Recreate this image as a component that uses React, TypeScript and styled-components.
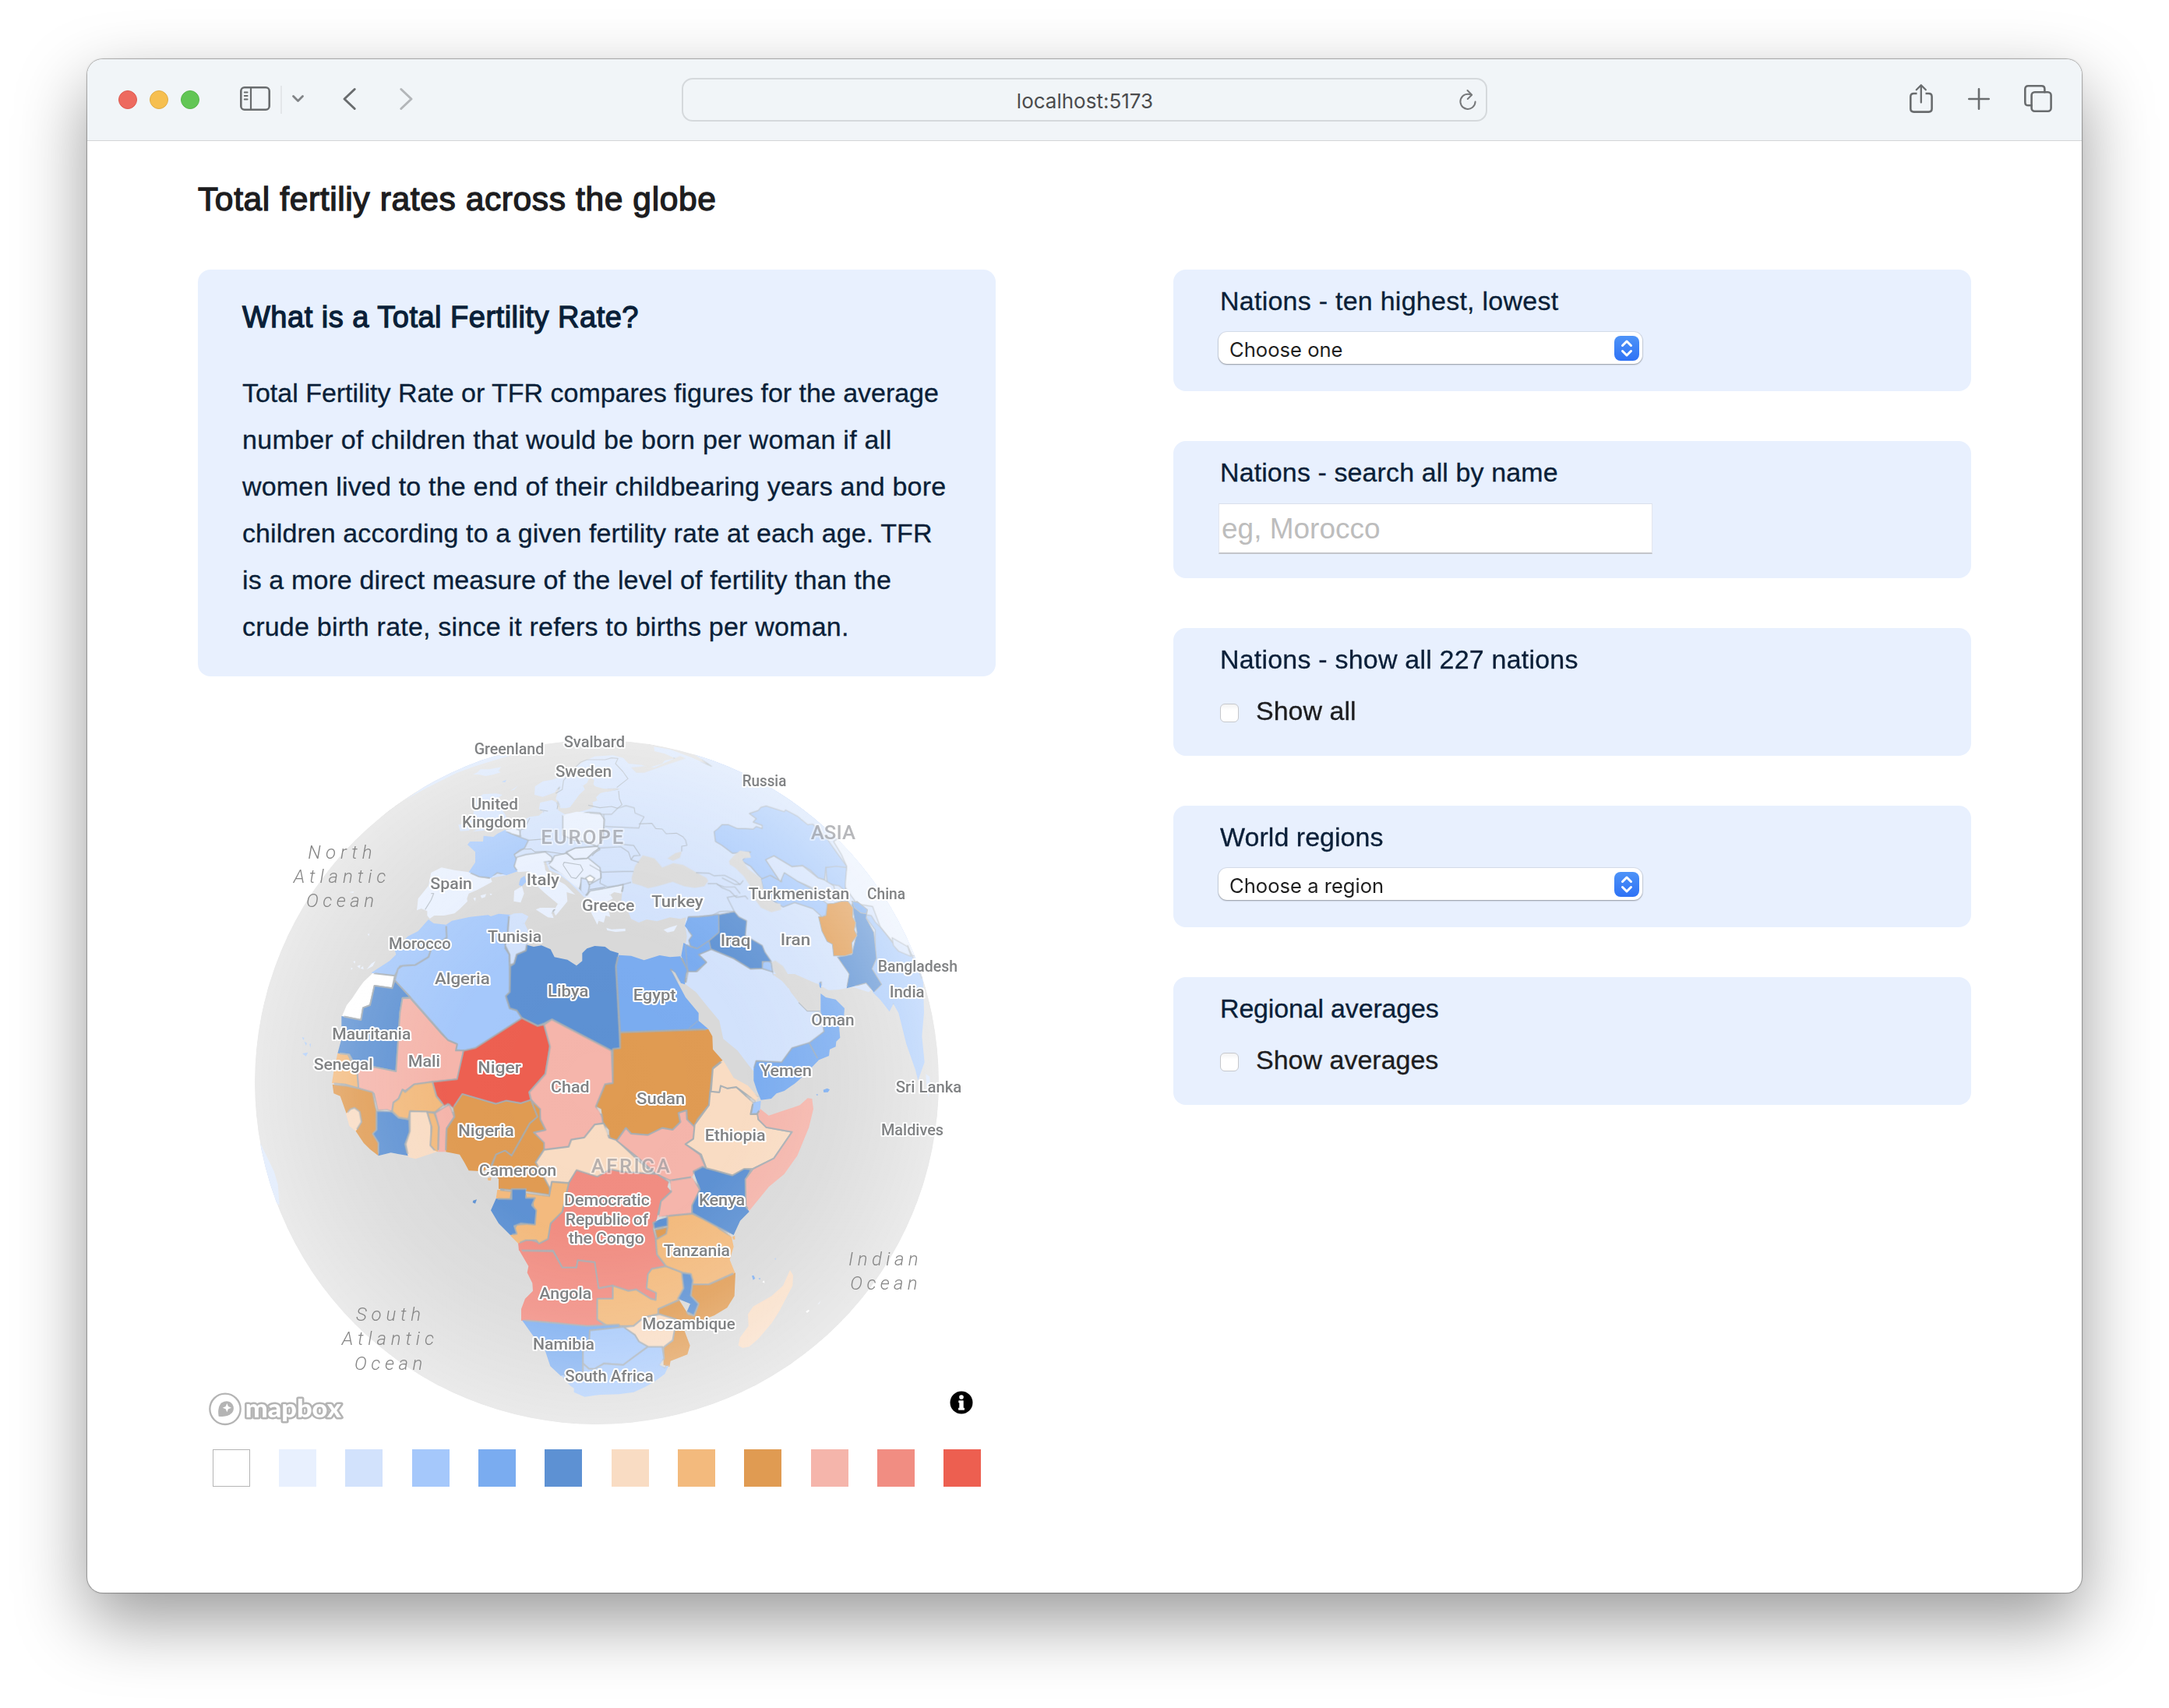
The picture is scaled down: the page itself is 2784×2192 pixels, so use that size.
import React from 'react';
import styled, { createGlobalStyle } from 'styled-components';

const sans = '"Liberation Sans", Helvetica, Arial, sans-serif';
const system = 'Inter, "Liberation Sans", sans-serif';

const GlobalStyle = createGlobalStyle`
  * { box-sizing: border-box; }
  html, body { margin: 0; background: #fff; }
  body { font-family: ${sans}; color: #1d1d1f; }
  h1, h2, p { margin: 0; }
`;

/* ---------- window ---------- */

const Desktop = styled.div`
  width: 2784px;
  height: 2192px;
  padding: 76px 112px 148px;
  overflow: hidden;
  background: #fff;
`;

const Window = styled.div`
  height: 1968px;
  display: flex;
  flex-direction: column;
  border-radius: 20px;
  overflow: hidden;
  background: #fff;
  box-shadow: 0 0 0 1px rgba(0, 0, 0, 0.2), 0 0 3px rgba(0, 0, 0, 0.25), 0 36px 90px rgba(0, 0, 0, 0.4);
`;

const Toolbar = styled.header`
  flex: none;
  height: 105px;
  display: grid;
  grid-template-columns: 1fr 1034px 1fr;
  align-items: center;
  background: #f1f5f8;
  border-bottom: 1px solid #d3d5d7;
`;

const ToolGroup = styled.div`
  display: flex;
  align-items: center;
`;

const LeftTools = styled(ToolGroup)`
  padding-left: 40px;
`;

const RightTools = styled(ToolGroup)`
  justify-content: flex-end;
  gap: 44.5px;
  padding: 0 38px 3px 0;
`;

const Lights = styled.div`
  display: flex;
  gap: 16px;
  margin-right: 44px;
`;

const Light = styled.span<{ $fill: string; $edge: string }>`
  width: 24px;
  height: 24px;
  border-radius: 50%;
  background: ${(p) => p.$fill};
  border: 1px solid ${(p) => p.$edge};
`;

const Divider = styled.span`
  width: 2px;
  height: 36px;
  margin: 0 13px;
  background: #e3e6e9;
`;

const IconSlot = styled.span<{ $ml?: number }>`
  display: flex;
  margin-left: ${(p) => p.$ml ?? 0}px;
  margin-bottom: 3px;
`;

const AddressBar = styled.div`
  height: 56px;
  display: grid;
  grid-template-columns: 44px 1fr 44px;
  align-items: center;
  border: 2px solid #d5d9dc;
  border-radius: 14px;
  font: 400 26px ${system};
  color: #4b4c4d;
  text-align: center;
`;

const Reload = styled.span`
  display: flex;
  justify-content: center;
  padding-right: 2px;
`;

const AddressText = styled.span`
  padding: 3px 0 0 1px;
`;

/* ---------- page ---------- */

const Page = styled.main`
  flex: 1;
  padding: 0 142px;
`;

const Title = styled.h1`
  height: 165px;
  padding-top: 50px;
  font-size: 42.5px;
  line-height: 50px;
  font-weight: 400;
  letter-spacing: 0.62px;
  -webkit-text-stroke: 1.4px currentColor;
`;

const Columns = styled.div`
  display: grid;
  grid-template-columns: 1024px 1024px;
  column-gap: 228px;
  align-items: start;
`;

const Panel = styled.section`
  background: #e8f0fe;
  border-radius: 16px;
  color: #0a1f38;
`;

const InfoPanel = styled(Panel)`
  height: 522px;
  padding: 39px 57px 0;
`;

const InfoTitle = styled.h2`
  font-size: 38px;
  line-height: 44px;
  font-weight: 400;
  letter-spacing: 0.5px;
  -webkit-text-stroke: 1.3px currentColor;
`;

const InfoText = styled.p`
  margin-top: 45px;
  font-size: 34px;
  line-height: 60px;
  white-space: nowrap;
  -webkit-text-stroke: 0.3px currentColor;
`;

const InfoLine = styled.span<{ $tracking: number }>`
  display: block;
  letter-spacing: ${(p) => p.$tracking}px;
`;

const MapFrame = styled.div`
  display: flex;
  margin-top: 32px;
  height: 940px;
`;

const Legend = styled.div`
  display: flex;
  justify-content: space-around;
  margin-top: 20px;
`;

const Swatch = styled.span<{ $color: string; $outlined?: boolean }>`
  width: 48px;
  height: 48px;
  background: ${(p) => p.$color};
  border: ${(p) => (p.$outlined ? '1px solid #b5b5b5' : 'none')};
`;

const Filters = styled.div`
  display: flex;
  flex-direction: column;
  gap: 64px;
`;

const FilterPanel = styled(Panel)<{ $height: number }>`
  height: ${(p) => p.$height}px;
  padding: 20px 58px 0;
`;

const FilterTitle = styled.h2<{ $tracking: number }>`
  padding-left: 2px;
  font-size: 34px;
  line-height: 40px;
  font-weight: 400;
  letter-spacing: ${(p) => p.$tracking}px;
  -webkit-text-stroke: 0.3px currentColor;
`;

const Select = styled.button`
  display: flex;
  align-items: center;
  justify-content: space-between;
  width: 544px;
  height: 41px;
  margin: 20px 0 0;
  padding: 0 4px 0 14px;
  border: 0;
  border-radius: 11px;
  background: #fff;
  box-shadow: 0 0 0 1px rgba(0, 0, 0, 0.07), 0 1px 2px rgba(0, 0, 0, 0.32);
  font: 400 25.6px/32px ${system};
  color: #1f1f1f;
`;

const SelectLabel = styled.span`
  padding-top: 4px;
`;

const Stepper = styled.span`
  display: flex;
  align-items: center;
  justify-content: center;
  width: 32px;
  height: 32px;
  border-radius: 8px;
  background: linear-gradient(#4d93f8, #2f72f5);
`;

const SearchInput = styled.input`
  display: block;
  width: 557px;
  height: 65px;
  margin: 20px 0 0;
  padding: 1px 4px 0 3px;
  border: 1px solid #e2e6ee;
  border-top-color: #d9dfeb;
  border-bottom: 2px solid #c3c5ca;
  background: #fff;
  font: 400 37px ${sans};
  &::placeholder { color: #bdbdbd; opacity: 1; }
`;

const CheckRow = styled.label`
  display: flex;
  align-items: center;
  margin-top: 26px;
  padding-left: 2px;
  font-size: 34px;
  line-height: 40px;
  color: #1d1d1f;
  gap: 22px;
  -webkit-text-stroke: 0.3px currentColor;
`;

const Checkbox = styled.input`
  appearance: none;
  width: 24px;
  height: 24px;
  margin: 5px 0 0;
  border: 1px solid #c6c8cc;
  border-radius: 6px;
  background: linear-gradient(#f3f3f3, #fff 35%);
`;

/* ---------- map ---------- */

const MapSvg = styled.svg`
  display: block;
  width: 1024px;
  height: 940px;
`;

const CountryLabel = styled.text`
  font-family: Roboto, sans-serif;
  font-weight: 500;
  font-size: 61px;
  fill: #808284;
  stroke: #fff;
  stroke-width: 12px;
  stroke-linejoin: round;
  paint-order: stroke;
`;

const ContinentLabel = styled.text`
  font-family: Roboto, sans-serif;
  font-weight: 500;
  font-size: 77px;
  fill: #8a8c92;
  fill-opacity: 0.62;
  stroke: #fff;
  stroke-opacity: 0.42;
  stroke-width: 12px;
  stroke-linejoin: round;
  paint-order: stroke;
`;

const OceanLabel = styled.text`
  font-family: Roboto, sans-serif;
  font-weight: 300;
  font-style: italic;
  font-size: 72px;
  fill: #868686;
`;

const LogoText = styled.text`
  font-family: Lato, sans-serif;
  font-weight: 900;
  font-size: 96px;
  fill: #fff;
  stroke: #b4b4b4;
  stroke-width: 15px;
  stroke-linejoin: round;
  paint-order: stroke;
`;

const palette = [
  '#ffffff', '#e8f0fe', '#d2e2fc', '#a5c8fb', '#7aacf0', '#5d91d3',
  '#f9dcc3', '#f3ba7d', '#e09b52', '#f5b5ab', '#f18d82', '#ed5f50',
];
const OCEAN = '#d9d9d9';

/* The globe is drawn as four tiles; each shape names its tile, colour and outline. */
type Tile = 'nw' | 'ne' | 'sw' | 'se';
type Shape = [Tile, number | 'sea', string];

const tileShift: Record<Tile, string> = {
  nw: 'translate(0 0)',
  ne: 'translate(1320 0)',
  sw: 'translate(0 1110)',
  se: 'translate(1320 1110)',
};

const base: Shape[] = [
  ['nw', 2, '600,290 760,180 870,132 1000,112 1010,118 960,132 870,160 800,185 740,215 680,245'],
  ['nw', 2, '862,192 880,182 890,172 925,172 970,163 960,178 968,184 940,192 910,198 885,192'],
  ['nw', 3, '972,220 990,212 985,222'],
  ['nw', 2, '1005,255 1035,235 1020,250'],
  ['nw', 2, '1098,270 1100,238 1130,218 1165,212 1200,200 1225,178 1260,160 1290,140 1330,122 1400,118 1440,128 1460,150 1510,155 1540,165 1590,150 1600,138 1640,130 1600,112 1560,102 1558,85 1620,95 1700,125 1780,160 1700,105 1650,60 1900,-50 2800,300 2800,900 2595,985 2430,990 2385,1030 2325,1010 2270,1020 2230,1022 2190,1000 2100,960 1690,960 1677,860 1685,815 1678,770 1682,742 1660,748 1620,742 1570,757 1530,750 1500,762 1470,748 1450,700 1432,680 1435,650 1440,625 1400,635 1360,640 1290,665 1265,640 1230,605 1190,575 1155,560 1140,525 1160,520 1100,500 1030,565 990,580 930,590 885,540 960,440 985,412 1020,400 1045,372 1080,355 1115,350 1132,335 1115,325 1120,300 1165,290 1185,300 1190,330 1215,345 1262,338 1310,325 1325,318 1322,298 1340,292 1335,280 1350,265 1370,258 1420,248 1340,246 1325,230 1328,212 1310,205 1300,225 1285,235 1292,250 1270,270 1250,298 1235,318 1220,322 1198,322 1190,300 1180,285 1195,240 1175,262 1130,278'],
  ['nw', 2, '815,385 830,365 865,368 870,385 845,408 812,410 805,385'],
  ['nw', 2, '862,350 870,290 900,268 950,265 975,270 945,290 960,310 985,345 1000,380 975,395 930,405 860,412 900,395 890,370 850,360'],
  ['ne', 1, '930,450 960,500 980,545 970,620 1020,690 1080,700 1110,780 1160,840 1220,885 1240,890 1500,900 1500,400 1000,400'],
  ['ne', 3, '1045,730 1075,735 1090,760 1110,780 1130,805 1165,850 1225,890 1215,850 1250,930 1275,990 1278,1110 1270,1200 1280,1300 1255,1370 1245,1330 1210,1230 1180,1110 1160,1075 1145,1105 1110,1060 1080,1030 1090,1000 1070,930 1090,900 1090,790'],
  ['ne', 2, '1155,820 1215,855 1228,892 1180,872 1160,850'],
  ['ne', 5, '1000,690 1020,680 1060,715 1055,745 1085,800 1095,900 1078,940 1115,1000 1085,1030 1055,995 980,1015 990,960 945,895 1000,885 1020,800'],
  ['ne', 4, '1000,680 1025,685 1060,712 1055,728 1035,725 1010,705'],
  ['ne', 8, '872,740 900,735 905,690 930,688 960,680 985,680 1005,705 1003,740 1015,762 1010,790 1020,812 1000,840 1003,880 975,890 930,890 925,845 905,835 885,795'],
  ['ne', 3, '470,412 485,400 500,385 525,385 560,400 590,400 620,402 632,392 655,400 655,388 620,375 632,362 605,342 640,330 650,318 670,313 740,335 745,328 790,352 830,385 850,383 905,440 940,490 980,545 975,585 965,612 940,600 900,548 895,598 870,590 840,560 810,543 770,547 700,505 670,520 725,605 690,582 655,595 640,580 610,545 575,525 610,490 540,495 500,465 475,450'],
  ['ne', 3, '900,550 940,545 980,550 975,610 975,640 950,620 905,612'],
  ['ne', 3, '650,595 685,580 730,605 728,575 740,570 775,582 790,602 860,640 870,660 905,690 900,732 885,740 850,708 780,685 735,702 700,680 660,640'],
  ['ne', 2, '668,520 700,505 770,547 810,543 870,590 895,598 930,620 935,640 985,650 920,650 870,640 830,620 790,602 740,570 725,605'],
];

const europe: Shape[] = [
  ['nw', 1, '700,570 740,550 790,560 845,568 885,585 930,592 935,605 880,635 845,650 838,670 840,680 810,710 790,727 750,735 712,735 695,747 685,735 685,718 662,708 645,715 650,670 690,620'],
  ['nw', 3, '840,462 850,450 900,450 902,428 940,432 955,420 985,405 1010,420 1040,432 1075,445 1060,475 1020,500 1030,520 1020,545 1033,565 990,580 955,570 930,590 885,585 845,568 870,530 870,490'],
  ['nw', 3, '1040,605 1045,592 1060,582 1066,605 1050,622 1038,618'],
  ['nw', 1, '1020,640 1050,622 1058,650 1045,685 1018,680'],
  ['nw', 1, '1030,510 1065,500 1140,490 1165,510 1165,525 1135,528 1140,560 1170,590 1215,615 1255,655 1222,645 1225,680 1205,705 1180,735 1170,720 1188,690 1140,650 1085,600 1075,565 1035,568 1020,545'],
  ['nw', 1, '1103,712 1120,705 1178,705 1165,725 1172,745 1150,742'],
  ['nw', 1, '1165,525 1175,505 1220,495 1300,510 1350,550 1355,590 1310,615 1280,600 1270,635 1240,610 1200,575 1150,540'],
  ['nw', 2, '1278,590 1300,595 1310,620 1305,645 1292,662 1275,640'],
  ['nw', 0, '1295,590 1312,580 1330,592 1320,605 1305,605'],
  ['nw', 1, '1220,490 1255,475 1340,468 1350,480 1325,495 1300,515 1250,518'],
  ['nw', 1, '1207,348 1260,335 1350,340 1368,365 1362,440 1340,468 1290,450 1250,445 1207,425'],
  ['nw', 1, '985,408 1015,400 1040,405 1045,430 1010,420'],
  ['nw', 1, '1295,665 1312,640 1380,628 1440,615 1432,650 1405,645 1390,655 1400,670 1372,685 1378,700 1390,740 1372,735 1365,762 1345,755 1340,770 1322,735 1305,700'],
  ['ne', 1, '55,782 75,788 128,785 128,795 90,798 58,792'],
  ['ne', 1, '275,790 300,780 328,772 315,795 290,800'],
  ['ne', 'sea', '152,590 165,545 195,503 240,515 270,550 312,533 350,540 400,568 440,590 447,602 432,622 395,628 355,622 310,605 250,622 215,630 190,620 155,610'],
  ['ne', 'sea', '290,515 320,495 345,488 338,512 312,524'],
  ['ne', 'sea', '527,525 550,500 570,485 605,490 612,512 575,515 600,555 650,592 660,640 700,685 725,690 728,712 690,722 650,705 625,670 620,640 585,585 550,550 530,538'],
  ['ne', 'sea', '150,165 200,160 240,165 300,138 340,120 360,130 300,150 200,185 170,185'],
  ['ne', 'sea', '0,235 50,248 110,246 60,258 20,262 -20,258'],
  ['ne', 2, '370,950 405,950 440,915 410,885 458,865 545,900 610,940 655,938 695,950 700,965 750,1000 765,1030 790,1062 800,1075 828,1103 875,1103 895,1180 840,1225 770,1245 730,1300 632,1295 622,1335 598,1305 560,1255 505,1210 490,1140 440,1080 400,1030 360,1000'],
  ['ne', 'sea', '690,915 705,908 735,930 755,962 800,985 870,998 880,1010 862,1050 845,1064 825,1068 795,1060 790,1035 775,1012 755,1015 730,985 700,950'],
  ['ne', 3, '652,938 658,915 675,905 690,918 695,952'],
  ['ne', 5, '487,732 548,720 565,740 595,755 590,812 655,850 665,875 690,912 655,912 655,938 610,940 545,900 455,862 450,832 488,800'],
  ['ne', 4, '370,740 410,740 487,730 488,800 450,832 405,862 378,852 372,830 385,812 357,775'],
  ['ne', 4, '352,840 378,855 405,862 450,832 458,865 410,885 440,915 400,950 368,950 343,890'],
  ['ne', 4, '880,1035 900,1050 938,1058 972,1092 970,1120 950,1150 955,1205 940,1220 938,1240 915,1250 912,1275 870,1292 835,1225 893,1182 880,1105'],
  ['ne', 4, '874,995 882,990 882,1015 876,1010'],
  ['se', 4, '622,215 632,185 730,190 770,135 835,115 872,182 840,215 800,255 780,272 740,300 710,310 690,330 650,335 635,300 622,260'],
];

const africa: Shape[] = [
  ['nw', 3, '690,750 710,765 758,770 762,820 700,865 690,895 640,925 580,930 560,967 480,960 470,955 540,910 565,885 560,868 610,815 650,795'],
  ['nw', 3, '758,770 780,755 850,740 920,733 930,738 960,728 1015,733 998,760 995,830 985,860 1002,885 1003,1030 988,1045 1003,1092 1030,1100 1050,1130 870,1250 830,1257 795,1252 800,1230 765,1215 620,1050 560,985 572,940 590,928 640,925 690,895 700,865 760,820'],
  ['nw', 2, '1000,735 1020,727 1050,725 1075,738 1060,765 1072,790 1090,830 1068,850 1065,870 1030,885 1020,920 1003,925 1002,885 985,850 995,800 998,760'],
  ['nw', 5, '1070,848 1095,855 1125,850 1160,865 1175,895 1225,905 1260,928 1282,910 1282,880 1300,862 1330,852 1370,855 1390,870 1422,880 1412,930 1428,1245 1395,1258 1165,1135 1135,1150 1110,1160 1050,1130 1030,1100 1003,1092 988,1045 1003,1030 1005,930 1020,920 1030,885 1065,870'],
  ['ne', 4, '102,887 150,890 200,907 260,888 300,895 340,892 368,945 362,960 357,1000 342,995 320,955 303,943 320,975 360,1050 410,1110 410,1140 448,1172 108,1185 92,930'],
  ['nw', 0, '475,957 560,967 550,1015 482,1005 465,1080 438,1090 430,1137 357,1122 375,1080 395,1055 425,1010 440,990'],
  ['sw', 5, '355,12 430,27 438,-20 465,-30 482,-105 550,-95 560,-125 620,-60 590,-58 580,0 565,225 480,208 410,205 385,160 340,155 355,100'],
  ['sw', 9, '590,-58 620,-57 740,80 765,105 800,120 795,145 825,145 805,255 720,265 635,275 600,300 590,295 575,330 555,345 550,380 530,372 495,375 480,310 420,290 415,215 480,208 565,225 580,0'],
  ['sw', 11, '1050,20 1110,50 1135,45 1158,125 1140,235 1078,305 1085,335 1045,348 990,338 950,350 820,315 785,365 765,350 750,357 720,320 705,265 800,255 825,145 870,135'],
  ['sw', 9, '1165,25 1395,145 1400,270 1370,275 1335,360 1360,400 1365,425 1330,430 1290,480 1240,488 1230,515 1135,527 1125,495 1095,460 1140,450 1120,410 1115,380 1085,335 1078,305 1140,235 1158,130 1135,45'],
  ['se', 8, '108,75 448,63 463,90 465,140 502,182 465,212 455,300 450,355 405,410 395,440 365,410 363,375 333,385 340,420 310,450 270,443 215,470 150,465 130,443 95,492 67,495 65,450 42,425 35,370 15,360 50,275 80,270 80,138 108,135'],
  ['sw', 7, '340,155 380,160 400,200 415,225 420,290 370,275 318,270 325,225'],
  ['sw', 8, '320,275 375,280 420,290 475,305 485,360 490,378 490,450 478,465 497,500 497,550 465,525 440,500 410,455 375,390 350,320 325,310'],
  ['sw', 6, '372,388 390,370 405,365 425,380 432,420 410,455 385,435'],
  ['sw', 5, '490,378 550,380 575,403 615,410 618,460 600,505 612,550 545,538 497,550 497,500 475,465 490,450'],
  ['sw', 7, '550,378 555,345 575,330 590,295 600,305 635,275 705,265 720,320 748,355 715,382 620,378 612,408 575,402'],
  ['sw', 6, '618,378 685,380 700,430 700,510 722,535 690,545 640,562 612,555 602,505 618,455'],
  ['sw', 7, '685,382 712,385 730,430 727,535 715,530 697,510 702,440'],
  ['sw', 9, '715,385 770,352 790,400 760,445 757,535 727,535 730,440'],
  ['sw', 8, '785,365 820,312 950,350 990,338 1045,348 1085,335 1110,400 1080,425 1010,550 985,530 950,545 930,590 900,610 845,607 828,575 810,545 757,535 760,445 790,400'],
  ['sw', 8, '1085,335 1120,370 1120,410 1140,450 1095,460 1135,500 1135,527 1103,575 1160,655 1155,700 1050,685 960,677 960,640 930,600 950,545 985,530 1010,550 1080,425 1110,400'],
  ['sw', 6, '1135,527 1230,515 1240,488 1290,480 1330,430 1365,425 1385,480 1415,490 1500,570 1570,630 1340,640 1260,610 1230,655 1165,650 1160,680 1103,575'],
  ['se', 9, '95,492 130,443 150,465 215,470 270,443 310,450 340,420 333,385 363,375 365,410 395,440 390,485 360,505 415,545 438,595 395,612 385,632 300,645 245,620 180,560'],
  ['se', 10, '-60,605 20,630 70,602 120,612 250,620 295,650 290,670 305,688 265,725 250,790 235,830 245,870 250,930 285,975 230,985 215,1010 210,1060 247,1075 245,1105 225,1100 170,1065 140,1070 80,1050 20,1060 10,960 -55,952 -60,980 -115,980 -150,915 -282,915 -285,885 -250,870 -200,885 -170,870 -160,810 -115,765 -90,655'],
  ['sw', 7, '955,680 1155,705 1165,650 1230,655 1205,765 1160,810 1150,870 1115,888 1105,875 1065,875 1035,887 1005,857 1030,815 1100,810 1090,715 1060,715 1060,690 1010,690 1005,717 950,715'],
  ['sw', 5, '1010,678 1065,678 1065,712 1100,712 1088,740 1105,760 1100,815 1045,810 1020,820 1030,850 1005,855 960,810 930,760 950,715 1010,717'],
  ['sw', 10, '1040,915 1170,918 1205,980 1260,980 1265,952 1330,960 1345,1060 1400,1050 1400,1102 1340,1102 1340,1180 1385,1212 1250,1205 1190,1195 1047,1185 1047,1140 1062,1100 1092,1070 1090,1040 1070,1000 1075,975'],
  ['se', 7, '20,1100 80,1100 80,1050 140,1070 170,1065 225,1100 245,1105 247,1078 210,1060 215,1005 230,985 285,975 350,1000 355,1060 335,1105 255,1140 255,1160 200,1172 160,1205 60,1205 20,1180'],
  ['se', 7, '245,870 290,830 290,780 385,772 480,815 490,830 537,862 545,900 530,950 550,1000 450,1045 385,1045 380,1005 350,1000 285,975 250,930'],
  ['se', 5, '235,808 260,795 290,787 290,820 240,830'],
  ['se', 8, '242,835 290,825 285,850 250,870'],
  ['se', 9, '300,645 385,632 415,680 385,745 385,772 255,785 265,725 305,688'],
  ['se', 5, '390,610 425,592 470,605 540,625 585,598 612,603 592,640 592,745 605,765 570,800 545,855 485,825 385,770 385,740 415,680'],
  ['se', 6, '455,302 490,305 495,280 520,290 555,285 620,345 610,390 640,390 640,410 670,440 770,458 700,560 620,600 585,600 540,625 470,605 440,598 420,545 360,505 390,485 395,430 450,355'],
  ['se', 6, '465,215 505,183 525,215 545,250 600,280 640,325 630,340 555,285 520,290 495,280 490,305 458,302'],
  ['se', 3, '612,390 620,345 650,338 647,372 635,388'],
  ['se', 9, '648,370 680,395 740,375 800,355 830,328 847,330 852,370 835,440 790,550 740,620 680,670 605,762 592,742 590,640 620,600 700,560 770,458 670,440 640,410 636,388'],
  ['se', 8, '385,1045 450,1045 552,1000 548,1090 520,1135 470,1165 400,1192 356,1225 377,1280 367,1315 302,1340 298,1362 275,1355 275,1285 310,1260 322,1180 255,1160 255,1140 335,1105 370,1160 392,1165 410,1120 380,1090'],
  ['se', 5, '345,1000 380,1005 388,1030 380,1088 410,1120 392,1165 365,1150 378,1120 330,1100 352,1060'],
  ['se', 6, '115,1210 160,1205 200,1172 260,1160 325,1180 310,1260 275,1287 215,1285 180,1265 165,1240'],
  ['nw', 4, '1050,2293 1110,2298 1301,2315 1423,2310 1430,2322 1311,2332 1308,2405 1285,2410 1285,2510 1200,2508 1159,2470 1139,2410 1098,2360'],
  ['nw', 3, '1311,2332 1423,2320 1440,2318 1485,2350 1500,2375 1535,2395 1480,2435 1440,2465 1365,2460 1330,2480 1308,2480 1285,2460 1285,2410 1308,2405'],
  ['nw', 3, '1285,2460 1308,2480 1330,2480 1365,2460 1440,2465 1480,2435 1535,2395 1590,2395 1597,2440 1580,2465 1600,2475 1616,2465 1600,2500 1560,2530 1524,2550 1480,2570 1423,2578 1350,2580 1291,2588 1250,2570 1250,2555 1235,2545 1200,2505 1285,2508'],
  ['se', 6, '762,990 774,1010 772,1050 750,1092 720,1150 691,1195 640,1255 605,1285 580,1290 563,1280 569,1250 602,1205 600,1160 620,1130 691,1090 735,1050'],
];

const islands: Shape[] = [
  ['se', 4, '890,296 905,290 915,295 908,305 892,306'],
  ['se', 4, '862,314 869,312 868,319'],
  ['sw', 5, '862,722 876,718 870,734 860,730'],
  ['sw', 7, '917,636 932,632 930,645 920,645'],
  ['se', 7, '528,890 538,884 540,896 530,900'],
  ['se', 7, '540,862 550,858 550,872 543,872'],
  ['se', 4, '615,1012 622,1010 628,1022 620,1028'],
  ['se', 4, '640,1022 648,1021 646,1027'],
  ['se', 0, '655,1036 663,1030 664,1040'],
  ['se', 0, '823,1150 832,1143 838,1146 828,1155'],
  ['se', 1, '868,1122 880,1108 875,1120'],
  ['se', 3, '703,948 706,942 708,950'],
  ['se', 2, '1285,235 1300,245 1302,290 1295,325 1288,290'],
  ['sw', 2, '30,480 48,512 95,610 110,660 116,740 60,700'],
  ['nw', 1, '383,645 403,642 400,648'],
  ['nw', 1, '400,912 408,910 406,920'],
  ['nw', 1, '392,935 398,938 392,945'],
  ['nw', 1, '415,930 428,925 425,938'],
  ['nw', 1, '428,938 438,930 440,942'],
  ['nw', 1, '452,942 470,920 486,910 475,930'],
  ['nw', 1, '455,806 463,805 460,814'],
  ['nw', 1, '862,668 872,665 870,680'],
  ['nw', 1, '890,658 912,652 908,664 895,668'],
  ['nw', 1, '925,650 935,652 930,658'],
  ['sw', 3, '203,93 212,96 208,105'],
  ['sw', 3, '212,110 222,116 218,126'],
  ['sw', 3, '204,156 226,152 218,167'],
  ['sw', 3, '232,120 237,118 235,134'],
];

const lands: Shape[] = [...base, ...europe, ...africa];

/* Borders that are only lines, with the same fill on both sides. */
const borders: [Tile, string][] = [
  ['nw', '700,650 710,650 700,675 677,712'],
  ['nw', '1185,325 1188,310'],
  ['nw', '1120,328 1150,333'],
  ['nw', '1180,265 1205,250 1210,215 1240,180 1275,145 1300,135 1370,135 1395,128 1420,130'],
  ['nw', '1040,432 1045,405 1060,400 1080,360'],
  ['nw', '1075,445 1140,440'],
  ['nw', '1020,500 1045,480 1085,478 1100,490 1140,488 1210,498 1255,475 1340,468'],
  ['nw', '1208,540 1212,530 1275,540 1285,560 1258,592 1240,588 1208,540'],
  ['nw', '1220,495 1250,518 1300,515 1325,490 1350,475'],
  ['nw', '1310,635 1370,625'],
  ['ne', '-15,310 30,320 75,315 98,322 115,308 105,285 102,255'],
  ['ne', '95,242 138,208 118,180 90,150 100,130'],
  ['ne', '-10,340 40,345 75,345 98,322 130,312 162,320 165,340 200,355 185,380 180,398 50,392'],
  ['ne', '45,345 45,395 30,445'],
  ['ne', '180,382 230,380 245,400 270,402 285,420 325,418 350,432 360,445 365,465 345,468 345,488'],
  ['ne', '0,505 25,475 110,470 140,490 150,520 180,530'],
  ['ne', '110,460 160,465 185,503 160,505 150,520'],
  ['ne', '-10,540 40,568 120,565 160,565'],
  ['ne', '35,570 30,610 60,625 100,620 150,607'],
  ['ne', '400,570 450,572 470,582 510,580 550,600 570,615 582,600'],
  ['ne', '445,612 480,612 500,628 530,640 555,665 590,660 600,672'],
  ['ne', '500,590 550,615 570,615'],
  ['ne', '480,615 510,625 550,625 570,650'],
  ['ne', '548,720 520,665 560,658'],
  ['ne', '372,740 460,735 490,720 520,718 548,720'],
  ['ne', '372,1170 408,1140'],
  ['ne', '360,845 362,880 368,950'],
  ['ne', '795,1070 828,1103 878,1103'],
];

type Label = [string, number, number, number];

const countryLabels: Label[] = [
  ['Greenland', 870, 1132, 115], ['Svalbard', 1215, 1443, 87], ['Sweden', 1183, 1392, 201],
  ['United', 858, 1032, 326], ['Kingdom', 823, 1063, 397], ['Russia', 1902, 2065, 236],
  ['Spain', 701, 855, 633], ['Italy', 1071, 1191, 617], ['Greece', 1285, 1480, 717],
  ['Turkey', 1553, 1745, 702], ['Turkmenistan', 1926, 2308, 673], ['China', 2383, 2523, 673],
  ['Morocco', 541, 773, 865], ['Tunisia', 922, 1123, 836], ['Algeria', 718, 923, 999],
  ['Libya', 1153, 1303, 1047], ['Mauritania', 323, 619, 1213], ['Egypt', 1482, 1640, 1063],
  ['Iraq', 1818, 1927, 853], ['Iran', 2049, 2158, 850], ['Bangladesh', 2424, 2724, 952],
  ['India', 2469, 2597, 1051], ['Oman', 2168, 2327, 1157], ['Senegal', 252, 473, 1328],
  ['Mali', 615, 732, 1317], ['Niger', 884, 1044, 1340], ['Chad', 1165, 1307, 1415],
  ['Nigeria', 808, 1016, 1583], ['Cameroon', 888, 1180, 1737], ['Democratic', 1216, 1539, 1852],
  ['Republic of', 1221, 1534, 1925], ['the Congo', 1233, 1517, 1997], ['Angola', 1121, 1315, 2211],
  ['Sudan', 1495, 1675, 1460], ['Yemen', 1972, 2163, 1352], ['Ethiopia', 1758, 1985, 1601],
  ['Kenya', 1735, 1906, 1850], ['Tanzania', 1599, 1848, 2047], ['Mozambique', 1517, 1868, 2327],
  ['Sri Lanka', 2493, 2740, 1416], ['Maldives', 2437, 2670, 1580], ['Namibia', 1096, 1326, 2405],
  ['South Africa', 1220, 1553, 2528],
];

const continentLabels: Label[] = [
  ['EUROPE', 1127, 1437, 459], ['ASIA', 2166, 2330, 440], ['AFRICA', 1320, 1615, 1726],
];

const oceanLabels: Label[] = [
  ['North', 232, 475, 515], ['Atlantic', 176, 528, 609], ['Ocean', 225, 482, 703],
  ['South', 417, 662, 2294], ['Atlantic', 362, 713, 2389], ['Ocean', 411, 669, 2483],
  ['Indian', 2313, 2578, 2082], ['Ocean', 2320, 2575, 2176],
];

const fillOf = (color: number | 'sea') => (color === 'sea' ? OCEAN : palette[color]);

const Fills = ({ items }: { items: Shape[] }) => (
  <g>
    {items.map(([tile, color, points], i) => (
      <polygon key={i} transform={tileShift[tile]} points={points} fill={fillOf(color)} />
    ))}
  </g>
);

const Outlined = ({ items, edge }: { items: Shape[]; edge: number }) => (
  <g stroke="#a6aeb4" strokeOpacity={0.9} strokeWidth={edge} strokeLinejoin="round">
    {items.map(([tile, color, points], i) => (
      <polygon
        key={i}
        transform={tileShift[tile]}
        points={points}
        fill={fillOf(color)}
        stroke={color === 'sea' ? 'none' : undefined}
      />
    ))}
  </g>
);

const Globe = () => (
  <MapSvg viewBox="-198 -90 3072 2820">
    <defs>
      <clipPath id="disc"><circle cx="1338" cy="1377" r="1317" /></clipPath>
      <filter id="inland" filterUnits="userSpaceOnUse" x="-198" y="-90" width="3072" height="2820">
        <feMorphology operator="dilate" radius="4" />
        <feMorphology operator="erode" radius="9" />
      </filter>
      <mask id="landMask" maskUnits="userSpaceOnUse" x="-198" y="-90" width="3072" height="2820">
        <g filter="url(#inland)">
          {lands.filter(([, color]) => color !== 'sea').map(([tile, , points], i) => (
            <polygon key={i} transform={tileShift[tile]} points={points} fill="#fff" />
          ))}
        </g>
      </mask>
      <radialGradient id="haze" gradientUnits="userSpaceOnUse" cx="1338" cy="1377" r="1317">
        <stop offset="0" stopColor="#fff" stopOpacity="0" />
        <stop offset="0.45" stopColor="#fff" stopOpacity="0.01" />
        <stop offset="0.7" stopColor="#fff" stopOpacity="0.14" />
        <stop offset="0.9" stopColor="#fff" stopOpacity="0.34" />
        <stop offset="1" stopColor="#fff" stopOpacity="0.46" />
      </radialGradient>
    </defs>
    <g clipPath="url(#disc)">
      <circle cx="1338" cy="1377" r="1317" fill={OCEAN} />
      <Fills items={lands} />
      <Fills items={islands} />
      <g mask="url(#landMask)">
        <Outlined items={base} edge={3.5} />
        <Outlined items={europe} edge={4} />
        <Outlined items={africa} edge={6} />
      </g>
      <g fill="none" stroke="#a9b1ba" strokeOpacity="0.8" strokeWidth="3.5" strokeLinejoin="round">
        {borders.map(([tile, points], i) => (
          <polyline key={i} transform={tileShift[tile]} points={points} />
        ))}
      </g>
      <circle cx="1338" cy="1377" r="1317" fill="url(#haze)" />
    </g>

    {oceanLabels.map(([text, x1, x2, y]) => (
      <OceanLabel key={text + x1} x={x1 - 6} y={y} textLength={x2 - x1 + 4}>{text}</OceanLabel>
    ))}
    {continentLabels.map(([text, x1, x2, y]) => (
      <ContinentLabel key={text} x={x1 - 4} y={y} textLength={x2 - x1 + 8}>{text}</ContinentLabel>
    ))}
    {countryLabels.map(([text, x1, x2, y]) => (
      <CountryLabel key={text} x={x1 - 4} y={y} textLength={x2 - x1 + 7} lengthAdjust="spacingAndGlyphs">
        {text}
      </CountryLabel>
    ))}

    <g transform="translate(-198 2520)">
      <circle cx="105" cy="115" r="59" fill="#fff" stroke="#b4b4b4" strokeWidth="7" />
      <path d="M80 143c-4-24 0-42 12-52 12-9 28-9 38 2 10 11 10 26 1 37-11 12-28 16-51 13z" fill="#b4b4b4" />
      <path d="M112 93l5 12 12 5-12 5-5 12-5-12-12-5 12-5z" fill="#fff" />
      <LogoText x="182" y="147" textLength="370" lengthAdjust="spacingAndGlyphs">mapbox</LogoText>
    </g>

    <g transform="translate(2742 2610)">
      <circle r="43.5" fill="#000" />
      <circle cy="-21" r="8.5" fill="#fff" />
      <path d="M-10-7H7V21H11V28H-11V21H-7V0H-10Z" fill="#fff" stroke="#fff" strokeWidth="2" strokeLinejoin="round" />
    </g>
  </MapSvg>
);

/* ---------- icons ---------- */

const Line = styled.svg<{ $color?: string; $weight?: number }>`
  display: block;
  overflow: visible;
  fill: none;
  stroke: ${(p) => p.$color ?? '#696c6e'};
  stroke-width: ${(p) => p.$weight ?? 2.6};
  stroke-linecap: round;
  stroke-linejoin: round;
`;

const SidebarIcon = () => (
  <Line width="39" height="31" viewBox="0 0 39 31">
    <rect x="1.3" y="1.3" width="36.4" height="28.4" rx="4.5" />
    <path d="M14 1.5V29.5" strokeWidth="2.2" />
    <path d="M5.8 7.5H9.6M5.8 12H9.6M5.8 16.5H9.6" strokeWidth="2" />
  </Line>
);

const ShareIcon = () => (
  <Line width="30" height="37" viewBox="0 0 30 37">
    <path d="M9.5 12H5.5Q1.3 12 1.3 16V31.5Q1.3 35.6 5.5 35.6H24.5Q28.6 35.6 28.6 31.5V16Q28.6 12 24.5 12H20.5" strokeLinecap="butt" />
    <path d="M14.8 23.5V2M8.8 7.2L14.8 1.3L20.8 7.2" strokeWidth="2.3" />
  </Line>
);

const PlusIcon = () => (
  <Line width="28" height="28" viewBox="0 0 28 28">
    <path d="M14 1.3V26.7M1.3 14H26.7" />
  </Line>
);

const TabsIcon = () => (
  <Line width="36" height="35" viewBox="0 0 36 35">
    <rect x="9.6" y="9.3" width="25" height="24.4" rx="4" />
    <path d="M9.6 26.3H5.3Q1.3 26.3 1.3 22.3V5.3Q1.3 1.3 5.3 1.3H22.4Q26.4 1.3 26.4 5.3V9.3" />
  </Line>
);

const ReloadIcon = () => (
  <Line width="22" height="26" viewBox="0 0 22 26" $color="#77797b" $weight={2}>
    <path d="M15.5 6.8A9.6 9.6 0 1 0 20.6 15.5" />
    <path d="M10.5 1L16.2 6.7L10.8 12" />
  </Line>
);

const StepperIcon = () => (
  <Line width="14" height="22" viewBox="0 0 14 22" $color="#fff" $weight={3}>
    <path d="M1.5 7.5L7 2L12.5 7.5M1.5 14.5L7 20L12.5 14.5" />
  </Line>
);

const description: [string, number][] = [
  ['Total Fertility Rate or TFR compares figures for the average', -0.02],
  ['number of children that would be born per woman if all', 0.28],
  ['women lived to the end of their childbearing years and bore', 0.19],
  ['children according to a given fertility rate at each age. TFR', 0.09],
  ['is a more direct measure of the level of fertility than the', 0.12],
  ['crude birth rate, since it refers to births per woman.', 0.21],
];

export default function App() {
  return (
    <>
      <GlobalStyle />
      <Desktop>
        <Window>
          <Toolbar>
            <LeftTools>
              <Lights>
                <Light $fill="#ed6a5f" $edge="#dd5a50" />
                <Light $fill="#f6bf50" $edge="#e0ac45" />
                <Light $fill="#62c655" $edge="#56b54a" />
              </Lights>
              <IconSlot $ml={8}><SidebarIcon /></IconSlot>
              <Divider />
              <IconSlot>
                <Line width="15" height="9" viewBox="0 0 15 9" $color="#808386" $weight={2.8}>
                  <path d="M1.5 1.5L7.5 7.5L13.5 1.5" />
                </Line>
              </IconSlot>
              <IconSlot $ml={50}>
                <Line width="17" height="28" viewBox="0 0 17 28" $weight={3}>
                  <path d="M15.2 1.5L2 14L15.2 26.5" />
                </Line>
              </IconSlot>
              <IconSlot $ml={56}>
                <Line width="17" height="28" viewBox="0 0 17 28" $color="#b3b6b9" $weight={3}>
                  <path d="M1.8 1.5L15 14L1.8 26.5" />
                </Line>
              </IconSlot>
            </LeftTools>
            <AddressBar>
              <span />
              <AddressText>localhost:5173</AddressText>
              <Reload><ReloadIcon /></Reload>
            </AddressBar>
            <RightTools>
              <ShareIcon />
              <PlusIcon />
              <TabsIcon />
            </RightTools>
          </Toolbar>

          <Page>
            <Title>Total fertiliy rates across the globe</Title>
            <Columns>
              <div>
                <InfoPanel>
                  <InfoTitle>What is a Total Fertility Rate?</InfoTitle>
                  <InfoText>
                    {description.map(([line, tracking]) => (
                      <InfoLine key={line} $tracking={tracking}>{line}</InfoLine>
                    ))}
                  </InfoText>
                </InfoPanel>
                <MapFrame><Globe /></MapFrame>
                <Legend>
                  {palette.map((color, i) => (
                    <Swatch key={color} $color={color} $outlined={i === 0} />
                  ))}
                </Legend>
              </div>

              <Filters>
                <FilterPanel $height={156}>
                  <FilterTitle $tracking={0.25}>Nations - ten highest, lowest</FilterTitle>
                  <Select>
                    <SelectLabel>Choose one</SelectLabel>
                    <Stepper><StepperIcon /></Stepper>
                  </Select>
                </FilterPanel>
                <FilterPanel $height={176}>
                  <FilterTitle $tracking={0.1}>Nations - search all by name</FilterTitle>
                  <SearchInput placeholder="eg, Morocco" />
                </FilterPanel>
                <FilterPanel $height={164}>
                  <FilterTitle $tracking={0.2}>Nations - show all 227 nations</FilterTitle>
                  <CheckRow><Checkbox type="checkbox" />Show all</CheckRow>
                </FilterPanel>
                <FilterPanel $height={156}>
                  <FilterTitle $tracking={0.03}>World regions</FilterTitle>
                  <Select>
                    <SelectLabel>Choose a region</SelectLabel>
                    <Stepper><StepperIcon /></Stepper>
                  </Select>
                </FilterPanel>
                <FilterPanel $height={164}>
                  <FilterTitle $tracking={-0.17}>Regional averages</FilterTitle>
                  <CheckRow><Checkbox type="checkbox" />Show averages</CheckRow>
                </FilterPanel>
              </Filters>
            </Columns>
          </Page>
        </Window>
      </Desktop>
    </>
  );
}
